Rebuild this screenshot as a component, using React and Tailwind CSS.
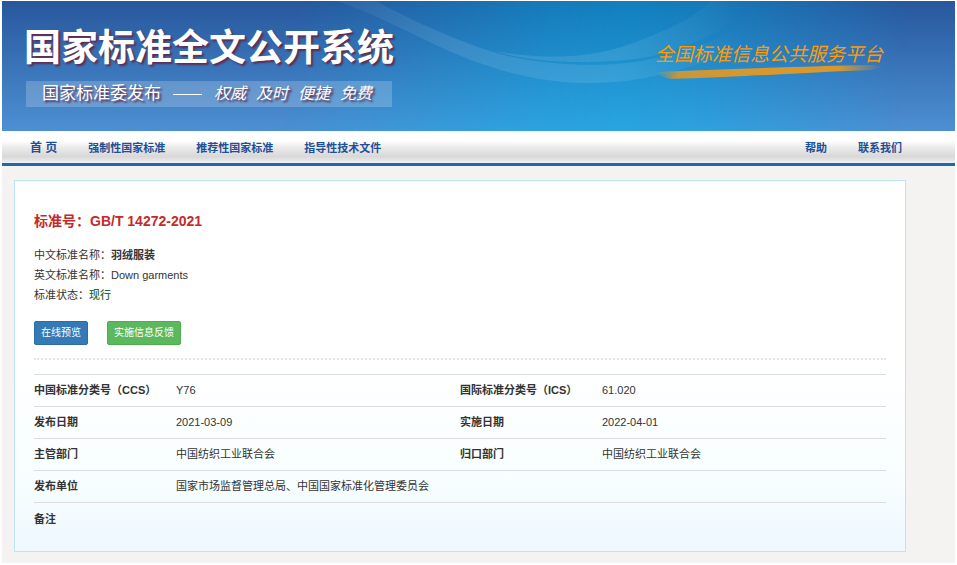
import React from "react";

const mainLinks = ["首 页", "强制性国家标准", "推荐性国家标准", "指导性技术文件"];
const sideLinks = ["帮助", "联系我们"];
const slogans = ["权威", "及时", "便捷", "免费"];

const rows = [
  ["中国标准分类号（CCS）", "Y76", "国际标准分类号（ICS）", "61.020"],
  ["发布日期", "2021-03-09", "实施日期", "2022-04-01"],
  ["主管部门", "中国纺织工业联合会", "归口部门", "中国纺织工业联合会"],
  ["发布单位", "国家市场监督管理总局、中国国家标准化管理委员会"],
  ["备注", ""],
];

const BannerArt = () => (
  <svg
    className="absolute inset-0 h-full w-full"
    viewBox="0 0 953 130"
    preserveAspectRatio="none"
    aria-hidden="true"
  >
    <defs>
      <linearGradient id="base" x1="0" y1="0" x2="0" y2="1">
        <stop offset="0" stopColor="#28579d" />
        <stop offset="1" stopColor="#4c90d3" />
      </linearGradient>
      <linearGradient id="glow" x1="0" y1="0" x2="0" y2="1">
        <stop offset="0" stopColor="#127fbd" />
        <stop offset="1" stopColor="#29a5e1" />
      </linearGradient>
      <linearGradient id="fade" gradientUnits="userSpaceOnUse" x1="290" y1="40" x2="900" y2="100">
        <stop offset="0" stopColor="#fff" stopOpacity="0" />
        <stop offset="0.42" stopColor="#fff" stopOpacity="0.9" />
        <stop offset="0.55" stopColor="#fff" stopOpacity="1" />
        <stop offset="0.66" stopColor="#fff" stopOpacity="0.85" />
        <stop offset="1" stopColor="#fff" stopOpacity="0" />
      </linearGradient>
      <linearGradient id="swoosh" gradientUnits="userSpaceOnUse" x1="330" y1="0" x2="740" y2="0">
        <stop offset="0" stopColor="#fff" stopOpacity="0.04" />
        <stop offset="0.3" stopColor="#fff" stopOpacity="0.1" />
        <stop offset="0.7" stopColor="#fff" stopOpacity="0.1" />
        <stop offset="1" stopColor="#fff" stopOpacity="0" />
      </linearGradient>
      <mask id="center">
        <rect width="953" height="130" fill="url(#fade)" />
      </mask>
    </defs>
    <rect width="953" height="130" fill="url(#base)" />
    <rect width="953" height="130" fill="url(#glow)" mask="url(#center)" />
    <path
      d="M334 0 C366 10 400 28 436 45 C490 70 540 83 595 82 C650 81 710 62 745 40 L745 22 C700 50 640 64 590 64 C550 64 510 58 485 49 C440 34 400 14 374 0 Z"
      fill="url(#swoosh)"
    />
    <path
      d="M492 50 C540 58 580 58 620 46 C660 32 695 16 708 0 L750 0 C735 24 690 48 640 57 C590 64 530 62 492 50 Z"
      fill="url(#swoosh)"
    />
  </svg>
);

const Brush = () => (
  <svg className="-mt-1 block h-4 w-full" viewBox="0 0 226 16" preserveAspectRatio="none" aria-hidden="true">
    <defs>
      <linearGradient id="ink" x1="0" y1="0" x2="1" y2="0">
        <stop offset="0" stopColor="#d9982c" stopOpacity="0" />
        <stop offset="0.1" stopColor="#d9982c" stopOpacity="0.9" />
        <stop offset="0.4" stopColor="#d9982c" />
        <stop offset="0.8" stopColor="#d9982c" />
        <stop offset="1" stopColor="#d9982c" stopOpacity="0" />
      </linearGradient>
    </defs>
    <path d="M1 7 C60 5 150 1 216 0 L226 2 L215 5 C160 7 80 12 16 14 C10 13 5 11 1 7 Z" fill="url(#ink)" />
  </svg>
);

const Header = () => (
  <header className="relative flex h-[130px] items-start justify-between pr-[72px] pl-[22px]">
    <BannerArt />
    <div className="relative pt-6">
      <h1 className="text-[37px] leading-12 font-bold text-white [text-shadow:2px_2px_2px_#5c2d50]">
        国家标准全文公开系统
      </h1>
      <div className="mt-2 ml-0.5 flex h-[26px] w-[366px] items-center bg-white/20 pl-4 text-[17px] leading-6 text-white [text-shadow:2px_2px_2px_#5c2d50]">
        <span>国家标准委发布</span>
        <span className="mx-3 h-px w-[29px] bg-white" />
        <p className="flex gap-2.5 text-[16px] italic">
          {slogans.map((s) => (
            <span key={s}>{s}</span>
          ))}
        </p>
      </div>
    </div>
    <a href="#platform" className="relative pt-10 text-[19px] leading-7 text-[#ff9c00] italic">
      全国标准信息公共服务平台
      <Brush />
    </a>
  </header>
);

const Nav = () => (
  <nav className="flex h-[35px] items-center justify-between border-b-3 border-[#2068ae] bg-[linear-gradient(#fff_0%,#fff_30%,#ececec_50%,#d8d8d8_80%,#f0f0f0_100%)] pt-0.5 pr-[53px] pl-7 text-[11px] font-bold text-[#1f4f95]">
    <div className="flex items-center gap-[31px]">
      {mainLinks.map((l) => (
        <a key={l} href="#nav" className={l === "首 页" ? "text-[12px]" : ""}>
          {l}
        </a>
      ))}
    </div>
    <div className="flex items-center gap-[31px]">
      {sideLinks.map((l) => (
        <a key={l} href="#nav">
          {l}
        </a>
      ))}
    </div>
  </nav>
);

export default function App() {
  return (
    <div className="bg-white px-0.5 pt-px pb-0.5 font-['Liberation_Sans','Noto_Sans_CJK_SC',sans-serif]">
      <div className="bg-[#f4f3f1] pb-[11px]">
        <Header />
        <Nav />
        <main className="mt-3.5 mr-[49px] ml-3 border border-[#bfe3f5] bg-[linear-gradient(#fff_50%,#f8feff_80%,#eef8fe)] px-[19px] pt-7 pb-4 text-[11px] text-[#333]">
          <h2 className="text-[14px] leading-6 font-bold text-[#c42a2a]">标准号：GB/T 14272-2021</h2>
          <div className="mt-3 leading-5">
            <p>
              中文标准名称：<b>羽绒服装</b>
            </p>
            <p>英文标准名称：Down garments</p>
            <p>
              标准状态：<span className="font-medium text-[#2b6a3c]">现行</span>
            </p>
          </div>
          <div className="mt-4 flex gap-[19px] text-[10px] leading-[22px] text-white">
            <button className="rounded-xs border border-[#2e6da4] bg-[#337ab7] px-1.5">在线预览</button>
            <button className="rounded-xs border border-[#4cae4c] bg-[#5cb85c] px-1.5">实施信息反馈</button>
          </div>
          <hr className="mt-[13px] mb-3.5 border-t-2 border-dotted border-[#e4e4e4]" />
          <table className="w-full table-fixed text-left">
            <colgroup>
              <col className="w-1/6" />
              <col className="w-1/3" />
              <col className="w-1/6" />
              <col className="w-1/3" />
            </colgroup>
            <tbody>
              {rows.map(([label, value, label2, value2]) => (
                <tr key={label} className="h-8 border-t border-[#ddd]">
                  <th scope="row">{label}</th>
                  <td colSpan={label2 ? 1 : 3}>{value}</td>
                  {label2 && <th scope="row">{label2}</th>}
                  {label2 && <td>{value2}</td>}
                </tr>
              ))}
            </tbody>
          </table>
        </main>
      </div>
    </div>
  );
}
